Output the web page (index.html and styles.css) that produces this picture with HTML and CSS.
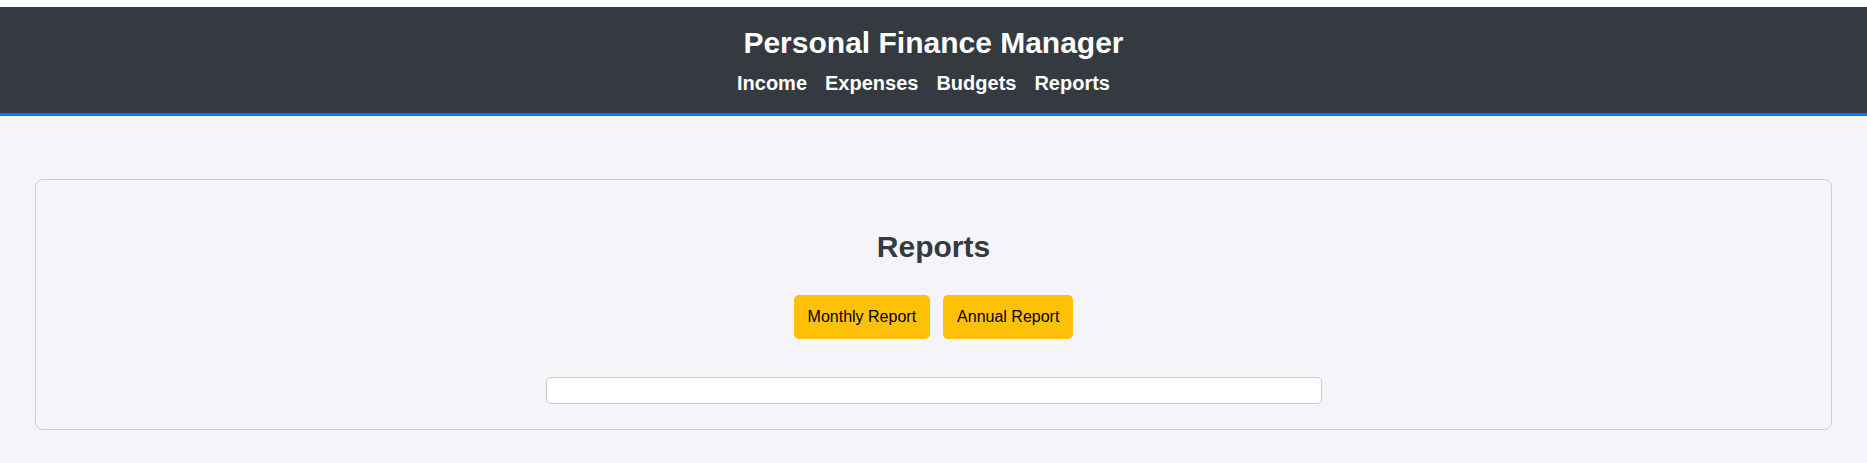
FILE: index.html
```html
<!DOCTYPE html>
<html lang="en">
<head>
<meta charset="utf-8">
<title>Personal Finance Manager</title>
<link rel="stylesheet" href="styles.css">
</head>
<body>
<header class="site-header">
  <h1 class="site-title">Personal Finance Manager</h1>
  <nav class="site-nav">
    <a href="#" class="nav-link">Income</a>
    <a href="#" class="nav-link">Expenses</a>
    <a href="#" class="nav-link">Budgets</a>
    <a href="#" class="nav-link">Reports</a>
  </nav>
</header>
<main class="main">
  <section class="card">
    <h2 class="card-title">Reports</h2>
    <div class="actions">
      <button class="btn">Monthly Report</button>
      <button class="btn">Annual Report</button>
    </div>
    <div class="report-output"></div>
  </section>
</main>
</body>
</html>
```
FILE: styles.css
```css
html {
  background: #ffffff;
}
body {
  margin: 7px 0 0;
  min-height: calc(100vh - 7px);
  background: #f4f4f9;
  font-family: "Liberation Sans", Arial, sans-serif;
  color: #343a40;
}
.site-header {
  background: #343a40;
  color: #ffffff;
  text-align: center;
  padding: 19px 0 18px;
  border-bottom: 3px solid #007bff;
}
.site-title {
  margin: 0 0 12px;
  font-size: 30px;
  font-weight: bold;
  line-height: normal;
}
.site-nav {
  display: flex;
  justify-content: center;
  gap: 18px;
  padding-right: 20px;
}
.nav-link {
  color: #ffffff;
  text-decoration: none;
  font-weight: bold;
  font-size: 20px;
}
.main {
  padding: 63px 35px 34px 35px;
}
.card {
  border: 1px solid #cccccc;
  border-radius: 8px;
  padding: 29px 20px 25px;
  display: flex;
  flex-direction: column;
  align-items: center;
}
.card-title {
  margin: 21px 0 0;
  font-size: 30px;
  font-weight: bold;
  line-height: normal;
  color: #343a40;
}
.actions {
  display: flex;
  gap: 13px;
  margin-top: 31px;
}
.btn {
  background: #ffc107;
  border: none;
  border-radius: 5px;
  padding: 13px 14px;
  font-family: "Liberation Sans", Arial, sans-serif;
  font-size: 16px;
  color: #000000;
  line-height: 18px;
}
.report-output {
  margin-top: 38px;
  width: 776px;
  height: 27px;
  box-sizing: border-box;
  background: #ffffff;
  border: 1px solid #cccccc;
  border-radius: 5px;
}
```
